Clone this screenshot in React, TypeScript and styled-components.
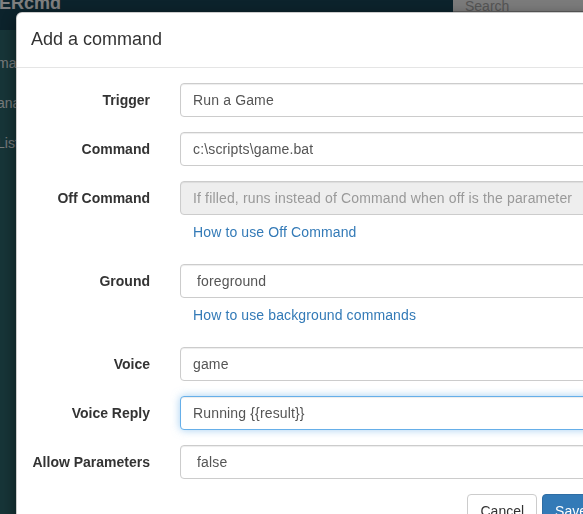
import React, { useEffect, useRef } from "react";
import styled, { createGlobalStyle, css } from "styled-components";

// Style

const GlobalStyle = createGlobalStyle`
  html, body {
    margin: 0;
    padding: 0;
    overflow: hidden;
    font-family: "Liberation Sans", Arial, sans-serif;
    font-size: 14px;
    color: #333;
  }
  * {
    box-sizing: border-box;
  }
`;

const Page = styled.div`
  width: 583px;
  height: 514px;
  display: flex;
  flex-direction: column;
  background-color: #2e6a70;
`;

const Navbar = styled.div`
  height: 30px;
  display: flex;
  justify-content: space-between;
  align-items: flex-start;
  background-color: #184658;
  overflow: hidden;
`;

const Brand = styled.div`
  margin-left: -1px;
  font-size: 18px;
  font-weight: bold;
  line-height: 7px;
  color: #ffffff;
`;

const Search = styled.div`
  width: 130px;
  height: 12px;
  padding-left: 12px;
  font-size: 14px;
  line-height: 12px;
  color: #aaaaaa;
  background-color: #f6f6f6;
  border-bottom: 1px solid #b8b8b8;
`;

const Sidebar = styled.div`
  display: flex;
  flex-direction: column;
  padding-top: 13px;
`;

const SideItem = styled.div`
  height: 40px;
  margin-left: -3px;
  font-size: 14px;
  line-height: 40px;
  color: #f0f6f7;
  white-space: nowrap;
`;

const Backdrop = styled.div`
  position: fixed;
  inset: 0;
  background-color: rgba(0, 0, 0, 0.5);
`;

const Modal = styled.div`
  position: fixed;
  top: 12px;
  left: 16px;
  width: 600px;
  background-color: #ffffff;
  border: 1px solid rgba(0, 0, 0, 0.2);
  border-radius: 6px;
  box-shadow: 0 5px 15px rgba(0, 0, 0, 0.5);
`;

const ModalHeader = styled.div`
  padding: 14px 15px 15px 14px;
  border-bottom: 1px solid #e5e5e5;
`;

const ModalTitle = styled.h4`
  margin: 0;
  font-size: 18px;
  font-weight: 500;
  line-height: 25px;
  color: #333;
`;

const ModalBody = styled.form`
  padding: 15px;
`;

const FormGroup = styled.div`
  display: grid;
  grid-template-columns: 118px 1fr;
  column-gap: 30px;
  margin-bottom: 15px;
`;

const Label = styled.label`
  padding-top: 7px;
  font-weight: bold;
  line-height: 20px;
  text-align: right;
  white-space: nowrap;
  color: #333;
`;

const Field = styled.div`
  display: flex;
  flex-direction: column;
`;

const controlStyle = css<{ $focused?: boolean }>`
  display: block;
  width: 100%;
  height: 34px;
  padding: 6px 12px;
  font-family: "Liberation Sans", Arial, sans-serif;
  font-size: 14px;
  line-height: 20px;
  letter-spacing: 0.15px;
  color: #555;
  background-color: #fff;
  border: 1px solid #ccc;
  border-radius: 4px;
  box-shadow: inset 0 1px 1px rgba(0, 0, 0, 0.075);
  outline: none;
  caret-color: #333;

  &::placeholder {
    color: #999;
  }

  &:disabled {
    background-color: #eee;
    cursor: not-allowed;
  }

  ${(p) =>
    p.$focused &&
    css`
      border-color: #66afe9;
      box-shadow: inset 0 1px 1px rgba(0, 0, 0, 0.075),
        0 0 8px rgba(102, 175, 233, 0.6);
    `}
`;

const Input = styled.input<{ $focused?: boolean }>`
  ${controlStyle}
`;

const Select = styled.select<{ $focused?: boolean }>`
  ${controlStyle}
  appearance: none;
  padding-left: 16px;
`;

const HelpLink = styled.a`
  display: block;
  margin: 7px 0;
  padding-left: 13px;
  line-height: 20px;
  letter-spacing: 0.12px;
  color: #337ab7;
  text-decoration: none;
`;

const Actions = styled.div`
  display: flex;
  justify-content: flex-end;
  gap: 5px;
`;

const Button = styled.button<{ $primary?: boolean }>`
  height: 34px;
  padding: 6px 12px;
  font-family: "Liberation Sans", Arial, sans-serif;
  font-size: 14px;
  line-height: 20px;
  border-radius: 4px;
  border: 1px solid ${(p) => (p.$primary ? "#2e6da4" : "#ccc")};
  background-color: ${(p) => (p.$primary ? "#337ab7" : "#fff")};
  color: ${(p) => (p.$primary ? "#fff" : "#333")};
`;

// render

export default function App() {
  const replyRef = useRef<HTMLInputElement>(null);

  useEffect(() => {
    const el = replyRef.current;
    if (el) {
      el.focus();
      el.setSelectionRange(el.value.length, el.value.length);
    }
  }, []);

  return (
    <>
      <GlobalStyle />
      <Page>
        <Navbar>
          <Brand>ERcmd</Brand>
          <Search>Search</Search>
        </Navbar>
        <Sidebar>
          <SideItem>marks</SideItem>
          <SideItem>analytics</SideItem>
          <SideItem>Lists</SideItem>
        </Sidebar>
      </Page>
      <Backdrop />
      <Modal>
        <ModalHeader>
          <ModalTitle>Add a command</ModalTitle>
        </ModalHeader>
        <ModalBody onSubmit={(e) => e.preventDefault()}>
          <FormGroup>
            <Label>Trigger</Label>
            <Field>
              <Input defaultValue="Run a Game" />
            </Field>
          </FormGroup>
          <FormGroup>
            <Label>Command</Label>
            <Field>
              <Input defaultValue="c:\scripts\game.bat" />
            </Field>
          </FormGroup>
          <FormGroup>
            <Label>Off Command</Label>
            <Field>
              <Input
                disabled
                placeholder="If filled, runs instead of Command when off is the parameter"
              />
              <HelpLink href="#">How to use Off Command</HelpLink>
            </Field>
          </FormGroup>
          <FormGroup>
            <Label>Ground</Label>
            <Field>
              <Select defaultValue="foreground">
                <option value="foreground">foreground</option>
                <option value="background">background</option>
              </Select>
              <HelpLink href="#">How to use background commands</HelpLink>
            </Field>
          </FormGroup>
          <FormGroup>
            <Label>Voice</Label>
            <Field>
              <Input defaultValue="game" />
            </Field>
          </FormGroup>
          <FormGroup>
            <Label>Voice Reply</Label>
            <Field>
              <Input ref={replyRef} $focused defaultValue="Running {{result}}" />
            </Field>
          </FormGroup>
          <FormGroup>
            <Label>Allow Parameters</Label>
            <Field>
              <Select defaultValue="false">
                <option value="false">false</option>
                <option value="true">true</option>
              </Select>
            </Field>
          </FormGroup>
          <Actions>
            <Button type="button">Cancel</Button>
            <Button type="submit" $primary>
              Save
            </Button>
          </Actions>
        </ModalBody>
      </Modal>
    </>
  );
}
